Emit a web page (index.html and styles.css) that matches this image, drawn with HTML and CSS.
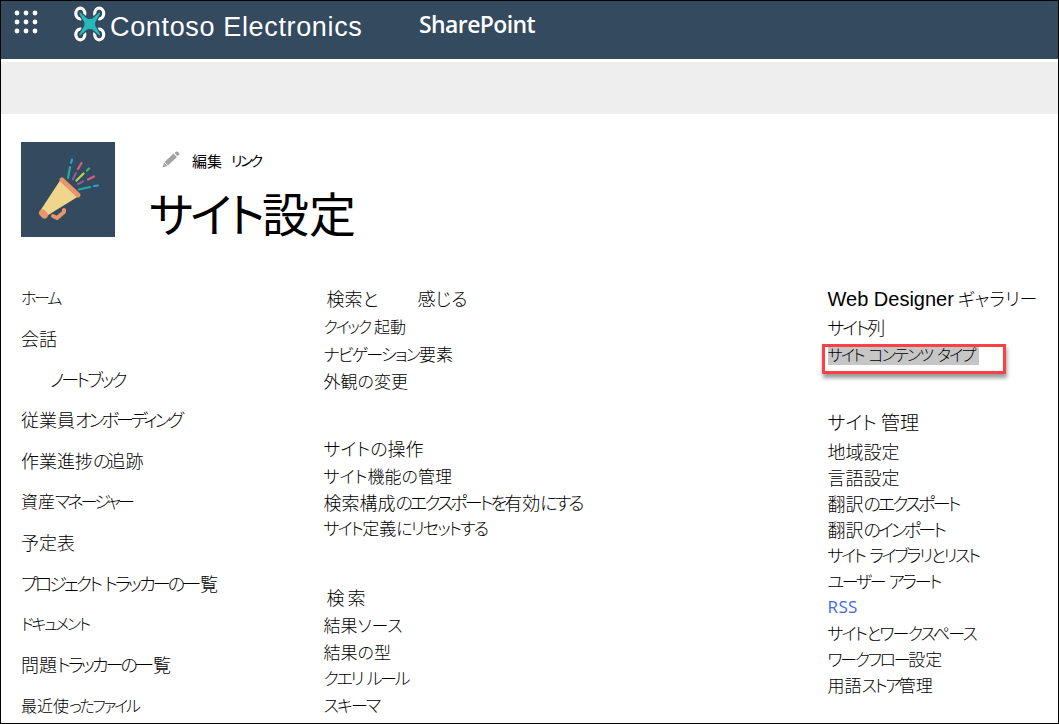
FILE: index.html
```
<!DOCTYPE html>
<html lang="ja">

<head>
    <meta charset="UTF-8">
    <meta name="viewport" content="width=device-width, initial-scale=1.0">
    <title>サイト設定</title>
    <link rel="stylesheet" href="styles.css">
</head>

<body>
    <header class="suite-bar">
        <svg class="waffle" width="24" height="24" viewBox="0 0 24 24" fill="#fff">
            <circle cx="3" cy="3" r="2.4"/><circle cx="12" cy="3" r="2.4"/><circle cx="21" cy="3" r="2.4"/>
            <circle cx="3" cy="12" r="2.4"/><circle cx="12" cy="12" r="2.4"/><circle cx="21" cy="12" r="2.4"/>
            <circle cx="3" cy="21" r="2.4"/><circle cx="12" cy="21" r="2.4"/><circle cx="21" cy="21" r="2.4"/>
        </svg>
        <svg class="logo" width="32" height="36" viewBox="0 0 32 36">
            <g fill="none" stroke="#fff" stroke-width="3.2">
                <ellipse cx="6.300" cy="7.500" rx="4.500" ry="5.300"/>
                <ellipse cx="25.200" cy="7.500" rx="4.500" ry="5.300"/>
                <ellipse cx="6.300" cy="28.500" rx="4.500" ry="5.300"/>
                <ellipse cx="25.200" cy="28.500" rx="4.500" ry="5.300"/>
            </g>
            <path fill="#26b8bd" stroke="#344a5e" stroke-width="2.4" stroke-linejoin="round" paint-order="stroke" d="M6 6.500L13 12.500Q15.800 13.500 18.500 12.500L25.500 6.500Q26.500 6.800 26 8L21.300 16Q20.700 18 21.300 20L26 28Q26.500 29.200 25.500 29.500L18.500 23.500Q15.800 22.500 13 23.500L6 29.500Q5 29.200 5.500 28L10.200 20Q10.800 18 10.200 16L5.500 8Q5 6.800 6 6.500Z"/>
        </svg>
        <span class="brand">Contoso Electronics</span>
        <span class="app-name">SharePoint</span>
    </header>
    <div class="ribbon"></div>

    <section class="title-area">
        <svg class="site-logo" width="94" height="95" viewBox="0 0 94 95">
            <rect width="94" height="95" fill="#344a5e"/>
            <path fill="none" stroke="#e8956b" stroke-width="4" stroke-linecap="round" stroke-linejoin="round" d="M32 74L36 76L43 70V68"/>
            <path fill="#f0d58c" d="M40 37L58 54L24 75L19 69Z"/>
            <path fill="none" stroke="#e8956b" stroke-width="5" stroke-linecap="round" d="M41 38L57 53"/>
            <path fill="none" stroke="#e8956b" stroke-width="7" stroke-linecap="round" d="M21.500 71L23.500 73"/>
            <g fill="none" stroke-width="2.200" stroke-linecap="round">
                <path stroke="#26a9a5" d="M47 36L49 25M58 47.500L69 45"/>
                <path stroke="#2f9fd8" d="M50 21L51 17.500M73 44L77 43.500"/>
                <path stroke="#8a5aa8" d="M52 37L55 31M57 42L62 39.500"/>
                <path stroke="#d8607c" d="M57 27L60.500 21M67 37.500L73 34.500"/>
                <path stroke="#b8d84a" d="M55.500 38.500L62.500 31.500"/>
                <path stroke="#4fb06a" d="M66 28.500L68 26.500"/>
            </g>
        </svg>
        <div class="title-text">
            <div class="edit-links">
                <svg width="18" height="17" viewBox="0 0 18 17" fill="#a3a3a3">
                    <path d="M.5 16.500L2 11.500L5.500 15ZM2.500 11L11.500 2.500L15 6L6 14.500ZM12.500 2L14 .7Q15 0 16.200 1L17 2Q17.800 3 17 4L15.500 5Z"/>
                </svg>
                <span>編集</span>
                <span class="link-word">リンク</span>
            </div>
            <h1><span class="title-kana">サイト</span>設定</h1>
        </div>
    </section>

    <main class="content">
        <nav class="quick-launch">
            <a class="size-16 kana">ホーム</a>
            <a>会話</a>
            <a class="sub kana-tight">ノートブック</a>
            <a>従業員<span class="kana-tight">オンボーディング</span></a>
            <a>作業進捗<span class="kana-tight">の</span>追跡</a>
            <a class="size-17">資産<span class="kana-tight">マネージャー</span></a>
            <a>予定表</a>
            <a><span class="kana-tight">プロジェクト トラッカーの</span>一覧</a>
            <a class="size-16 kana">ドキュメント</a>
            <a>問題<span class="kana-tight">トラッカーの</span>一覧</a>
            <a class="size-16">最近使<span class="kana">ったファイル</span></a>
        </nav>

        <div class="settings">
            <section class="group top">
                <h3 class="indent"><span class="look">検索と</span><span>感じる</span></h3>
                <a class="size-16"><span class="kana">クイック </span>起動</a>
                <a><span class="kana-wide">ナビゲーション</span>要素</a>
                <a>外観の変更</a>
            </section>
            <section class="group">
                <h3>サイトの操作</h3>
                <a>サイト機能の管理</a>
                <a class="size-18">検索構成<span class="kana-tight">のエクスポートを</span>有効<span class="kana-tight">にする</span></a>
                <a><span class="kana-wide">サイト</span>定義<span class="kana-wide">にリセットする</span></a>
            </section>
            <section class="group search">
                <h3 class="indent spaced">検索</h3>
                <a>結果ソース</a>
                <a>結果の型</a>
                <a class="kana">クエリ ルール</a>
                <a class="kana-wide">スキーマ</a>
            </section>
        </div>

        <div class="settings right">
            <section class="group top">
                <h3><span class="latin">Web Designer</span> ギャラリー</h3>
                <a class="size-18"><span class="kana">サイト</span>列</a>
                <a class="size-16 kana-wide"><mark>サイト コンテンツ タイプ</mark></a>
                <div class="callout"></div>
            </section>
            <section class="group admin">
                <h3 class="size-19">サイト 管理</h3>
                <a class="size-18">地域設定</a>
                <a class="size-18">言語設定</a>
                <a class="size-18">翻訳<span class="kana-tight">のエクスポート</span></a>
                <a class="size-18">翻訳<span class="kana-tight">のインポート</span></a>
                <a class="kana">サイト ライブラリとリスト</a>
                <a class="kana">ユーザー アラート</a>
                <a class="rss">RSS</a>
                <a class="kana-wide">サイトとワークスペース</a>
                <a><span class="kana">ワークフロー</span>設定</a>
                <a>用語<span class="kana">ストア</span>管理</a>
            </section>
        </div>
    </main>
</body>

</html>
```
FILE: styles.css
```
* {
    box-sizing: border-box;
}

body {
    margin: 0;
    height: 724px;
    border: 1px solid #000;
    background-color: #fff;
    color: #000;
    font-family: "Noto Sans CJK JP", sans-serif;
    font-weight: 300;
    font-feature-settings: "palt";
    overflow: hidden;
}

/* Top bar */
.suite-bar {
    display: flex;
    height: 58px;
    padding-left: 13px;
    background-color: #344a5e;
    color: #fff;
    white-space: nowrap;
}

.waffle {
    margin-top: 9px;
}

.logo {
    margin: 5px 0 0 36px;
}

.brand {
    width: 313px;
    padding-left: 4px;
    font-family: "Liberation Sans", Arial, sans-serif;
    font-size: 27px;
    font-weight: 400;
    letter-spacing: 0.65px;
    line-height: 52px;
}

.app-name {
    font-family: "Open Sans", sans-serif;
    font-size: 23px;
    font-weight: 600;
    letter-spacing: -0.6px;
    line-height: 47px;
}

.ribbon {
    height: 52px;
    margin-top: 3px;
    background-color: #eee;
}

/* Site logo and page title */
.title-area {
    display: flex;
    height: 170px;
    padding: 28px 0 0 20px;
}

.title-text {
    padding-left: 34px;
}

.edit-links {
    display: flex;
    align-items: center;
    height: 36px;
    padding-left: 13px;
    font-size: 15px;
    font-weight: 400;
}

.edit-links svg {
    margin: -2px 12px 0 0;
}

.edit-links .link-word {
    margin-left: 9px;
    font-size: 14px;
    letter-spacing: -2.3px;
}

h1 {
    margin: 0;
    font-size: 47px;
    font-weight: 400;
    line-height: 68px;
}

.title-kana {
    letter-spacing: -3px;
}

/* Columns */
.content {
    display: flex;
    white-space: nowrap;
}

.quick-launch {
    display: flex;
    flex-direction: column;
    width: 322.5px;
    margin-top: -7px;
    padding-left: 20px;
    font-size: 18px;
}

.quick-launch a {
    height: 40.8px;
    line-height: 40px;
}

.quick-launch .sub {
    padding-left: 29px;
}

.settings {
    width: 504px;
    margin-top: -1px;
    font-size: 17px;
}

.settings.right {
    width: 230px;
}

.group {
    position: relative;
    margin-bottom: 39px;
}

.group h3 {
    margin: 0;
    font-size: 18px;
    font-weight: 300;
    line-height: 30px;
}

.group a {
    display: block;
    height: 26px;
    line-height: 26px;
}

.group.top a {
    height: 27px;
    line-height: 27px;
}

.group.search {
    margin-top: 41px;
}

.group.search a {
    height: 26.5px;
}

.group .indent {
    padding-left: 3px;
}

.group .spaced {
    letter-spacing: 3px;
}

.look {
    display: inline-block;
    width: 91px;
}

.group .latin {
    font-family: "Liberation Sans", Arial, sans-serif;
    font-size: 20px;
    font-weight: 400;
}

.group .rss {
    color: #4169e1;
    font-family: "Open Sans", sans-serif;
    font-weight: 400;
    letter-spacing: 0.4px;
}

mark {
    display: inline-block;
    width: 151px;
    height: 20px;
    background-color: #c6c6c6;
    color: #000;
    line-height: 18px;
}

.callout {
    position: absolute;
    top: 61px;
    left: -6px;
    width: 184px;
    height: 30px;
    border: 3px solid #fb4143;
    box-shadow: 1px 4px 4px rgba(0, 0, 0, 0.4);
}

.group.admin {
    margin-top: 38px;
}

.group.admin h3 {
    margin-bottom: 1px;
}

/* Text sizes */
.quick-launch .size-16,
.size-16 {
    font-size: 16px;
}

.size-17 {
    font-size: 17px;
}

.size-18 {
    font-size: 18px;
}

.group .size-19 {
    font-size: 19px;
}

/* Kana tracking */
.kana,
.kana-tight,
.kana-wide {
    word-spacing: 3px;
}

.kana {
    letter-spacing: -2.3px;
}

.kana-tight {
    letter-spacing: -2.9px;
}

.kana-wide {
    letter-spacing: -1.8px;
}
```
